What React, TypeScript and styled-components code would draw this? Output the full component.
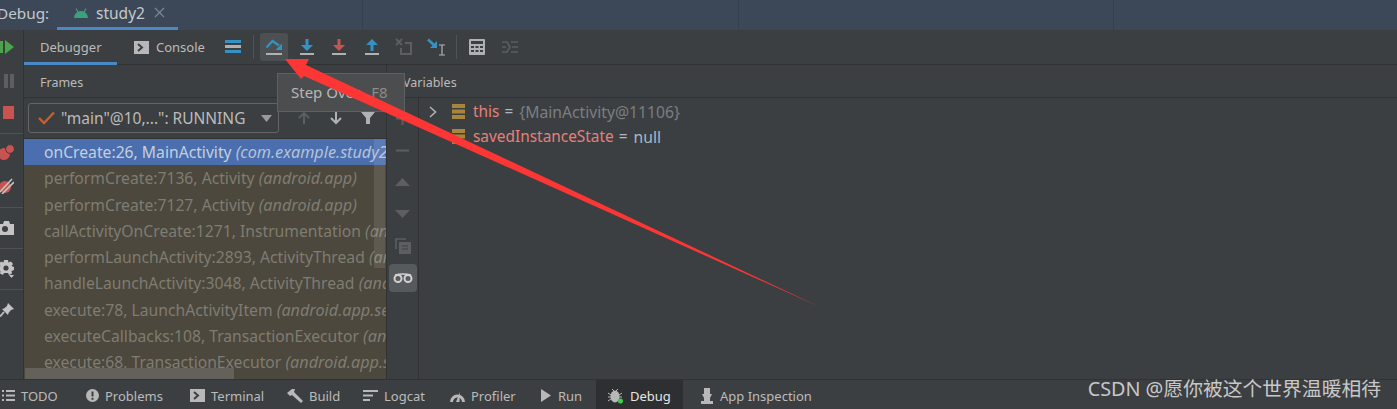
import React from 'react';
import styled, { createGlobalStyle } from 'styled-components';

const GlobalStyle = createGlobalStyle`
  html, body {
    margin: 0;
    padding: 0;
    background: #3c3f41;
  }
`;

const uiFont = `"Noto Sans", "Open Sans", "Liberation Sans", sans-serif`;

const Page = styled.div`
  position: relative;
  width: 1397px;
  height: 409px;
  overflow: hidden;
  display: flex;
  flex-direction: column;
  background: #3c3f41;
  color: #bbbbbb;
  font-family: ${uiFont};
  font-size: 13px;
`;

const TitleBar = styled.div`
  height: 30px;
  flex: none;
  display: grid;
  grid-template-columns: 363px 376px 375px 1fr;
  background: #3c4858;
`;

const TitleCell = styled.div`
  display: flex;
  align-items: stretch;
  border-right: 1px solid #34404d;
  &:last-child {
    border-right: 0;
  }
`;

const DebugLabel = styled.span`
  margin-left: -3px;
  width: 60px;
  line-height: 27px;
  font-size: 15.3px;
  color: #c4c8cc;
`;

const RunTab = styled.div`
  width: 121px;
  box-sizing: border-box;
  display: flex;
  align-items: center;
  gap: 7px;
  padding: 0 0 2px 16px;
  border-bottom: 3px solid #4a88c7;
  font-size: 15.5px;
  color: #c4c8cc;
`;

const TabClose = styled.span`
  display: flex;
  margin-left: 2px;
  color: #7d8791;
`;

const Body = styled.div`
  flex: 1;
  min-height: 0;
  display: flex;
`;

const LeftStrip = styled.div`
  width: 24px;
  flex: none;
  box-sizing: border-box;
  border-right: 1px solid #323232;
  display: flex;
  flex-direction: column;
  overflow: hidden;
`;

const StripGroup = styled.div<{ $height: number }>`
  height: ${(p) => p.$height}px;
  flex: none;
  box-sizing: border-box;
  display: flex;
  align-items: center;
  justify-content: flex-end;
  padding-right: 9px;
  border-bottom: 1px solid #515151;
  &:last-child {
    border-bottom: 0;
  }
`;

const StripStack = styled.div`
  display: flex;
  flex-direction: column;
  align-items: flex-end;
  padding: 0 9px 5px 0;
  border-bottom: 1px solid #515151;
`;

const StripIcon = styled.div<{ $height: number }>`
  height: ${(p) => p.$height}px;
  display: flex;
  align-items: center;
`;

const Main = styled.div`
  flex: 1;
  min-width: 0;
  display: flex;
  flex-direction: column;
`;

const TabsBar = styled.div`
  height: 35px;
  flex: none;
  box-sizing: border-box;
  display: flex;
  align-items: center;
  border-bottom: 1px solid #323232;
`;

const PanelTab = styled.div<{ $active?: boolean }>`
  height: 35px;
  box-sizing: border-box;
  display: flex;
  align-items: center;
  gap: 7px;
  padding-top: 3px;
  color: #bbbbbb;
  border-bottom: 3px solid ${(p) => (p.$active ? '#4a88c7' : 'transparent')};
`;

const DebuggerTab = styled(PanelTab)`
  width: 93px;
  padding-left: 16px;
`;

const ConsoleTab = styled(PanelTab)`
  width: 102px;
  padding-left: 17px;
`;

const ToolDivider = styled.span`
  width: 1px;
  height: 24px;
  background: #505254;
  margin: 0 6px;
`;

const TrailingDivider = styled(ToolDivider)`
  margin-left: 1px;
`;

const ToolButton = styled.div<{ $active?: boolean }>`
  width: 28px;
  height: 28px;
  margin-right: 4.5px;
  border-radius: 3px;
  display: flex;
  align-items: center;
  justify-content: center;
  background: ${(p) => (p.$active ? '#4c5052' : 'transparent')};
`;

const LayoutButton = styled.div`
  width: 28px;
  height: 28px;
  display: flex;
  align-items: center;
  justify-content: center;
`;

const Panels = styled.div`
  flex: 1;
  min-height: 0;
  display: flex;
`;

const FramesPanel = styled.div`
  width: 363px;
  flex: none;
  box-sizing: border-box;
  border-right: 1px solid #323232;
  display: flex;
  flex-direction: column;
`;

const PanelHeader = styled.div`
  height: 33px;
  flex: none;
  box-sizing: border-box;
  display: flex;
  align-items: center;
  padding: 2px 0 0 16px;
  border-bottom: 1px solid #323232;
  font-size: 12.5px;
  color: #bbbbbb;
`;

const ThreadRow = styled.div`
  height: 41px;
  flex: none;
  box-sizing: border-box;
  display: flex;
  align-items: center;
  padding: 0 0 0 4px;
  border-bottom: 1px solid #323232;
`;

const ThreadCombo = styled.div`
  width: 251px;
  height: 30px;
  box-sizing: border-box;
  display: flex;
  align-items: center;
  gap: 6px;
  padding: 0 6px 0 9px;
  border: 1px solid #646464;
  border-radius: 3px;
  font-size: 15.5px;
  color: #bbbbbb;
`;

const ComboText = styled.span`
  flex: 1;
  white-space: nowrap;
`;

const FrameTools = styled.div`
  display: flex;
  margin-left: 9px;
`;

const FrameTool = styled.div`
  width: 32px;
  display: flex;
  justify-content: center;
`;

const FrameList = styled.div`
  position: relative;
  flex: 1;
  min-height: 0;
  overflow: hidden;
  background: #4c483d;
`;

const FrameRow = styled.div<{ $selected?: boolean }>`
  height: 26.3px;
  box-sizing: border-box;
  padding-left: 20px;
  line-height: 27px;
  white-space: nowrap;
  font-size: 15.7px;
  color: ${(p) => (p.$selected ? '#c4cfde' : '#7f7c72')};
  background: ${(p) => (p.$selected ? '#4b6eaf' : 'transparent')};
  em {
    font-size: 16.2px;
    color: ${(p) => (p.$selected ? '#b4c2d6' : '#7f7c72')};
  }
`;

const VerticalThumb = styled.div`
  position: absolute;
  top: 0;
  right: 1px;
  width: 11px;
  height: 129px;
  background: rgba(255, 255, 255, 0.1);
`;

const HorizontalThumb = styled.div`
  position: absolute;
  left: 1px;
  bottom: 0;
  width: 209px;
  height: 11px;
  background: #63615a;
`;

const VariablesPanel = styled.div`
  flex: 1;
  min-width: 0;
  display: flex;
  flex-direction: column;
`;

const VariablesBody = styled.div`
  flex: 1;
  min-height: 0;
  display: flex;
`;

const SideTools = styled.div`
  width: 32px;
  flex: none;
  box-sizing: border-box;
  border-right: 1px solid #323232;
  display: flex;
  flex-direction: column;
  align-items: center;
  padding-top: 6px;
`;

const SideTool = styled.div<{ $active?: boolean }>`
  width: 28px;
  height: 28px;
  margin-bottom: 4px;
  border-radius: 4px;
  display: flex;
  align-items: center;
  justify-content: center;
  background: ${(p) => (p.$active ? '#565a5c' : 'transparent')};
`;

const VariableList = styled.div`
  flex: 1;
  padding: 1px 0 0 10px;
`;

const VariableRow = styled.div`
  height: 25px;
  display: flex;
  align-items: center;
  font-size: 15.4px;
  white-space: nowrap;
`;

const Expander = styled.span`
  width: 23px;
  display: flex;
`;

const VarName = styled.span`
  margin-left: 8px;
  color: #e5807b;
`;

const VarEquals = styled.span`
  padding: 0 2px 0 1px;
  color: #a9b7c6;
  white-space: pre;
`;

const VarValue = styled.span<{ $dim?: boolean }>`
  font-size: 15.7px;
  color: ${(p) => (p.$dim ? '#7a7e81' : '#a9b7c6')};
`;

const BottomBar = styled.div`
  height: 30px;
  flex: none;
  box-sizing: border-box;
  display: flex;
  align-items: stretch;
  border-top: 1px solid #323232;
  padding-left: 2px;
`;

const BottomItem = styled.div<{ $width: number; $active?: boolean }>`
  width: ${(p) => p.$width}px;
  flex: none;
  box-sizing: border-box;
  display: flex;
  align-items: center;
  gap: 6px;
  padding-top: 2px;
  font-size: 13px;
  color: ${(p) => (p.$active ? '#e6e6e6' : '#bbbbbb')};
  white-space: nowrap;
`;

const ActiveBottomItem = styled(BottomItem)`
  padding-left: 12px;
  background: #2d2f30;
`;

const InspectionItem = styled(BottomItem)`
  margin-left: 17px;
`;

const Watermark = styled.div`
  position: absolute;
  right: 16px;
  bottom: 9px;
  font-family: "Noto Sans", "Noto Sans CJK SC", sans-serif;
  font-size: 19.8px;
  line-height: 22px;
  color: #c8c8c8;
  white-space: nowrap;
`;

const Tooltip = styled.div`
  position: absolute;
  left: 277px;
  top: 73px;
  width: 128px;
  height: 39px;
  box-sizing: border-box;
  padding: 0 0 2px 13px;
  display: flex;
  align-items: center;
  gap: 11px;
  background: #4c4d4e;
  border: 1px solid #5f6061;
  font-size: 15px;
  color: #b8b8b8;
  white-space: nowrap;
`;

const Shortcut = styled.span`
  color: #8b8b8b;
`;

const ArrowOverlay = styled.svg`
  position: absolute;
  left: 0;
  top: 0;
  width: 1397px;
  height: 409px;
  pointer-events: none;
`;

const Icon = styled.svg`
  display: block;
  flex: none;
`;

const AndroidIcon = () => (
  <Icon width="16" height="12" viewBox="0 0 16 12">
    <path d="M1 11 a7 7 0 0 1 14 0z" fill="#3ba17c" />
    <path d="M3 1.5 L5 5 M13 1.5 L11 5" stroke="#3ba17c" strokeWidth="1.2" />
  </Icon>
);

const CloseIcon = () => (
  <Icon width="11" height="11" viewBox="0 0 11 11">
    <path d="M1 1 L10 10 M10 1 L1 10" stroke="currentColor" strokeWidth="1.2" />
  </Icon>
);

const TerminalIcon = () => (
  <Icon width="15" height="15" viewBox="0 0 15 15">
    <rect x="0" y="1" width="15" height="13" fill="#b8b8b8" />
    <path d="M4 4 L8 7.5 L4 11" fill="none" stroke="#3c3f41" strokeWidth="2" />
  </Icon>
);

const LayoutIcon = () => (
  <Icon width="16" height="14" viewBox="0 0 16 14">
    <rect y="0" width="16" height="3" fill="#3592c4" />
    <rect y="5" width="16" height="3" fill="#b0b0b0" />
    <rect y="10" width="16" height="3" fill="#3592c4" />
  </Icon>
);

const StepOverIcon = () => (
  <Icon width="18" height="18" viewBox="0 0 18 18">
    <path d="M1.5 9.5 L7.5 3 L14 7.5" fill="none" stroke="#3592c4" strokeWidth="2.2" />
    <path d="M17 5.5 V12 H10.5z" fill="#3592c4" />
    <rect x="1" y="15" width="16" height="2" fill="#afb1b3" />
  </Icon>
);

const StepDownIcon = ({ color }: { color: string }) => (
  <Icon width="16" height="18" viewBox="0 0 16 18">
    <path d="M6.5 1 H9.5 V7 H14 L8 13 L2 7 H6.5z" fill={color} />
    <rect x="1" y="15" width="14" height="2" fill="#afb1b3" />
  </Icon>
);

const StepUpIcon = () => (
  <Icon width="16" height="18" viewBox="0 0 16 18">
    <path d="M6.5 13 H9.5 V7 H14 L8 1 L2 7 H6.5z" fill="#3592c4" />
    <rect x="1" y="15" width="14" height="2" fill="#afb1b3" />
  </Icon>
);

const DropFrameIcon = () => (
  <Icon width="18" height="18" viewBox="0 0 18 18">
    <path d="M1 1 L7 7 M7 1 L1 7" stroke="#5c5e60" strokeWidth="1.8" />
    <path d="M10 5 H16 V16 H6 V10" fill="none" stroke="#5c5e60" strokeWidth="2" />
  </Icon>
);

const CursorIcon = () => (
  <Icon width="20" height="18" viewBox="0 0 20 18">
    <path d="M1 1.5 L7 7" fill="none" stroke="#3592c4" strokeWidth="2.6" />
    <path d="M10 3 V10 H3z" fill="#3592c4" />
    <path d="M12 7 H18 M12 17 H18 M15 7 V17" fill="none" stroke="#afb1b3" strokeWidth="1.2" />
  </Icon>
);

const CalculatorIcon = () => (
  <Icon width="16" height="16" viewBox="0 0 16 16">
    <rect width="16" height="16" rx="1" fill="#afb1b3" />
    <rect x="2" y="2" width="12" height="3" fill="#3c3f41" />
    <path d="M2 7h3v2H2zM6.5 7h3v2h-3zM11 7h3v2h-3zM2 11h3v2H2zM6.5 11h3v2h-3zM11 11h3v2h-3z" fill="#3c3f41" />
  </Icon>
);

const TraceIcon = () => (
  <Icon width="16" height="14" viewBox="0 0 16 14">
    <path
      d="M0 2 H5 L8 7 L5 12 H0 M0 7 H4 M9 2 H16 M10 7 H16 M9 12 H16"
      fill="none"
      stroke="#5c5e60"
      strokeWidth="1.6"
    />
  </Icon>
);

const CheckIcon = () => (
  <Icon width="17" height="14" viewBox="0 0 17 14">
    <path d="M1 7 L6 12 L16 1.5" fill="none" stroke="#c75f2d" strokeWidth="2.4" />
  </Icon>
);

const CaretDown = () => (
  <Icon width="11" height="7" viewBox="0 0 11 7">
    <path d="M0 0 H11 L5.5 7z" fill="#9a9a9a" />
  </Icon>
);

const ArrowIcon = ({ dir, color }: { dir: 'up' | 'down'; color: string }) => (
  <Icon width="14" height="14" viewBox="0 0 14 14">
    <path
      d={dir === 'up' ? 'M7 13 V2 M2 7 L7 2 L12 7' : 'M7 1 V12 M2 7 L7 12 L12 7'}
      fill="none"
      stroke={color}
      strokeWidth="2"
    />
  </Icon>
);

const FilterIcon = () => (
  <Icon width="14" height="14" viewBox="0 0 14 14">
    <path d="M0 1 H14 L9 7 V13 H5 V7z" fill="#afb1b3" />
  </Icon>
);

const ResumeIcon = () => (
  <Icon width="14" height="14" viewBox="0 0 14 14">
    <rect x="0" y="1" width="3" height="12" fill="#4aa54a" />
    <path d="M5 0 L14 7 L5 14z" fill="#4aa54a" />
  </Icon>
);

const PauseIcon = () => (
  <Icon width="10" height="14" viewBox="0 0 10 14">
    <rect x="0" y="0" width="4" height="14" fill="#5c5e60" />
    <rect x="6" y="0" width="4" height="14" fill="#5c5e60" />
  </Icon>
);

const StopIcon = () => (
  <Icon width="11" height="13" viewBox="0 0 11 13">
    <rect width="11" height="13" fill="#c75450" />
  </Icon>
);

const BreakpointsIcon = () => (
  <Icon width="15" height="16" viewBox="0 0 15 16">
    <circle cx="5" cy="10" r="6" fill="#c75450" />
    <circle cx="11" cy="5" r="4.4" fill="#c75450" stroke="#3c3f41" />
  </Icon>
);

const MuteIcon = () => (
  <Icon width="15" height="16" viewBox="0 0 15 16">
    <circle cx="6" cy="9" r="6" fill="#c75450" />
    <path d="M0 15 L13 1 M3 16 L15 4" stroke="#c4c4c4" strokeWidth="1.6" />
  </Icon>
);

const CameraIcon = () => (
  <Icon width="15" height="14" viewBox="0 0 15 14">
    <path d="M0 3 H4 L5 0 H10 L11 3 H15 V14 H0z" fill="#c4c4c4" />
    <circle cx="6" cy="8" r="3" fill="#3c3f41" />
  </Icon>
);

const GearIcon = () => (
  <Icon width="15" height="18" viewBox="0 0 15 18">
    <path
      d="M5 0 H9 L9.5 2.5 L12 1.5 L14 4 L12.5 6 L15 7 V10 L12.5 11 L13 13.5 L10 15 L9 13 H5 L4 15 L1 13.5 L1.5 11 L0 10 V7 L1.5 6 L0 4 L2 1.5 L4.5 2.5z"
      fill="#c4c4c4"
    />
    <circle cx="7" cy="8" r="2.6" fill="#3c3f41" />
    <path d="M10 15 H15 L12.5 18z" fill="#c4c4c4" />
  </Icon>
);

const PinIcon = () => (
  <Icon width="14" height="14" viewBox="0 0 14 14">
    <path d="M8 0 L14 6 L11 7 L8.5 10 L8 12 L2 6 L4 5.5 L7 3z" fill="#c4c4c4" />
    <path d="M4 9 L0 13.5" stroke="#c4c4c4" strokeWidth="1.8" />
  </Icon>
);

const PlusIcon = () => (
  <Icon width="13" height="13" viewBox="0 0 13 13">
    <path d="M6.5 0 V13 M0 6.5 H13" stroke="#5c5e60" strokeWidth="2" />
  </Icon>
);

const MinusIcon = () => (
  <Icon width="13" height="13" viewBox="0 0 13 13">
    <path d="M0 6.5 H13" stroke="#5c5e60" strokeWidth="2" />
  </Icon>
);

const TriangleIcon = ({ dir }: { dir: 'up' | 'down' }) => (
  <Icon width="15" height="8" viewBox="0 0 15 8">
    <path d={dir === 'up' ? 'M0 8 L7.5 0 L15 8z' : 'M0 0 L15 0 L7.5 8z'} fill="#5c5e60" />
  </Icon>
);

const CopyIcon = () => (
  <Icon width="16" height="16" viewBox="0 0 16 16">
    <path d="M1 11 V1 H11" fill="none" stroke="#5c5e60" strokeWidth="1.6" />
    <rect x="4" y="4" width="12" height="12" fill="#5c5e60" />
    <path d="M7 8 H13 M7 11 H13" stroke="#3c3f41" />
  </Icon>
);

const GlassesIcon = () => (
  <Icon width="20" height="10" viewBox="0 0 20 10">
    <circle cx="5" cy="5.5" r="3.5" fill="none" stroke="#d0d0d0" strokeWidth="2" />
    <circle cx="15" cy="5.5" r="3.5" fill="none" stroke="#d0d0d0" strokeWidth="2" />
    <path d="M2 2 Q10 0 18 2" fill="none" stroke="#d0d0d0" strokeWidth="1.4" />
  </Icon>
);

const ChevronIcon = () => (
  <Icon width="8" height="12" viewBox="0 0 8 12">
    <path d="M1 1 L6.5 6 L1 11" fill="none" stroke="#afb1b3" strokeWidth="1.6" />
  </Icon>
);

const FieldIcon = () => (
  <Icon width="13" height="15" viewBox="0 0 13 15">
    <path d="M0 0h13v4H0zM0 5.5h13v4H0zM0 11h13v4H0z" fill="#a9853a" />
  </Icon>
);

const ListIcon = () => (
  <Icon width="13" height="11" viewBox="0 0 13 11">
    <path d="M0 0h2v2H0zM0 4.5h2v2H0zM0 9h2v2H0zM4 0h9v2H4zM4 4.5h9v2H4zM4 9h9v2H4z" fill="#b8b8b8" />
  </Icon>
);

const AlertIcon = () => (
  <Icon width="13" height="13" viewBox="0 0 13 13">
    <circle cx="6.5" cy="6.5" r="6.5" fill="#b8b8b8" />
    <rect x="5.5" y="2.5" width="2" height="5" fill="#3c3f41" />
    <rect x="5.5" y="8.8" width="2" height="2" fill="#3c3f41" />
  </Icon>
);

const HammerIcon = () => (
  <Icon width="16" height="14" viewBox="0 0 16 14">
    <path d="M0 4 L5 0 H8 L7 3 L16 12 L14 14 L5 6 L3 7z" fill="#b8b8b8" />
  </Icon>
);

const LogcatIcon = () => (
  <Icon width="15" height="11" viewBox="0 0 15 11">
    <path d="M0 0h15v2H0zM0 4.5h10v2H0zM0 9h7v2H0z" fill="#b8b8b8" />
  </Icon>
);

const ProfilerIcon = () => (
  <Icon width="15" height="13" viewBox="0 0 15 13">
    <path d="M0 13 A7.5 7.5 0 0 1 15 13 H12 A4.5 4.5 0 0 0 3 13z" fill="#b8b8b8" />
    <path d="M6 13 L10 3 L9.5 13z" fill="#b8b8b8" />
  </Icon>
);

const RunIcon = () => (
  <Icon width="12" height="13" viewBox="0 0 12 13">
    <path d="M1 0 L11 6.5 L1 13z" fill="#b8b8b8" />
  </Icon>
);

const BugIcon = () => (
  <Icon width="16" height="16" viewBox="0 0 16 16">
    <ellipse cx="7" cy="8.5" rx="4.5" ry="6" fill="#b8b8b8" />
    <path d="M0 5 L3 7 M0 9 H3 M0 13 L3 11 M14 5 L11 7 M14 9 H11 M14 13 L11 11 M4 1 L6 3 M10 1 L8 3" stroke="#b8b8b8" />
    <circle cx="12.5" cy="13" r="2.5" fill="#3fd04a" />
  </Icon>
);

const InspectionIcon = () => (
  <Icon width="14" height="16" viewBox="0 0 14 16">
    <path d="M4 0 H10 V6 H12 L10 10 V13 H13 V16 H1 V13 H4 V10 L2 6 H4z" fill="#b8b8b8" />
  </Icon>
);

const frames: [string, string][] = [
  ['performCreate:7136, Activity', '(android.app)'],
  ['performCreate:7127, Activity', '(android.app)'],
  ['callActivityOnCreate:1271, Instrumentation', '(android.app)'],
  ['performLaunchActivity:2893, ActivityThread', '(android.app)'],
  ['handleLaunchActivity:3048, ActivityThread', '(android.app)'],
  ['execute:78, LaunchActivityItem', '(android.app.servertransaction)'],
  ['executeCallbacks:108, TransactionExecutor', '(android.app)'],
  ['execute:68, TransactionExecutor', '(android.app.servertransaction)'],
];

export default function App() {
  return (
    <>
      <GlobalStyle />
      <Page>
        <TitleBar>
          <TitleCell>
            <DebugLabel>Debug:</DebugLabel>
            <RunTab>
              <AndroidIcon />
              study2
              <TabClose>
                <CloseIcon />
              </TabClose>
            </RunTab>
          </TitleCell>
          <TitleCell />
          <TitleCell />
          <TitleCell />
        </TitleBar>
        <Body>
          <LeftStrip>
            <StripStack>
              <StripIcon $height={34}><ResumeIcon /></StripIcon>
              <StripIcon $height={33}><PauseIcon /></StripIcon>
              <StripIcon $height={31}><StopIcon /></StripIcon>
            </StripStack>
            <StripStack>
              <StripIcon $height={36}><BreakpointsIcon /></StripIcon>
              <StripIcon $height={32}><MuteIcon /></StripIcon>
            </StripStack>
            <StripGroup $height={41}><CameraIcon /></StripGroup>
            <StripGroup $height={41}><GearIcon /></StripGroup>
            <StripGroup $height={40}><PinIcon /></StripGroup>
          </LeftStrip>
          <Main>
            <TabsBar>
              <DebuggerTab $active>Debugger</DebuggerTab>
              <ConsoleTab>
                <TerminalIcon />
                Console
              </ConsoleTab>
              <LayoutButton><LayoutIcon /></LayoutButton>
              <ToolDivider />
              <ToolButton $active><StepOverIcon /></ToolButton>
              <ToolButton><StepDownIcon color="#3592c4" /></ToolButton>
              <ToolButton><StepDownIcon color="#c75450" /></ToolButton>
              <ToolButton><StepUpIcon /></ToolButton>
              <ToolButton><DropFrameIcon /></ToolButton>
              <ToolButton><CursorIcon /></ToolButton>
              <TrailingDivider />
              <ToolButton><CalculatorIcon /></ToolButton>
              <ToolButton><TraceIcon /></ToolButton>
            </TabsBar>
            <Panels>
              <FramesPanel>
                <PanelHeader>Frames</PanelHeader>
                <ThreadRow>
                  <ThreadCombo>
                    <CheckIcon />
                    <ComboText>"main"@10,...": RUNNING</ComboText>
                    <CaretDown />
                  </ThreadCombo>
                  <FrameTools>
                    <FrameTool><ArrowIcon dir="up" color="#5c5e60" /></FrameTool>
                    <FrameTool><ArrowIcon dir="down" color="#afb1b3" /></FrameTool>
                    <FrameTool><FilterIcon /></FrameTool>
                  </FrameTools>
                </ThreadRow>
                <FrameList>
                  <FrameRow $selected>
                    onCreate:26, MainActivity <em>(com.example.study2)</em>
                  </FrameRow>
                  {frames.map(([name, pkg]) => (
                    <FrameRow key={name}>
                      {name} <em>{pkg}</em>
                    </FrameRow>
                  ))}
                  <VerticalThumb />
                  <HorizontalThumb />
                </FrameList>
              </FramesPanel>
              <VariablesPanel>
                <PanelHeader>Variables</PanelHeader>
                <VariablesBody>
                  <SideTools>
                    <SideTool><PlusIcon /></SideTool>
                    <SideTool><MinusIcon /></SideTool>
                    <SideTool><TriangleIcon dir="up" /></SideTool>
                    <SideTool><TriangleIcon dir="down" /></SideTool>
                    <SideTool><CopyIcon /></SideTool>
                    <SideTool $active><GlassesIcon /></SideTool>
                  </SideTools>
                  <VariableList>
                    <VariableRow>
                      <Expander><ChevronIcon /></Expander>
                      <FieldIcon />
                      <VarName>this</VarName>
                      <VarEquals> = </VarEquals>
                      <VarValue $dim>{'{MainActivity@11106}'}</VarValue>
                    </VariableRow>
                    <VariableRow>
                      <Expander />
                      <FieldIcon />
                      <VarName>savedInstanceState</VarName>
                      <VarEquals> = </VarEquals>
                      <VarValue>null</VarValue>
                    </VariableRow>
                  </VariableList>
                </VariablesBody>
              </VariablesPanel>
            </Panels>
          </Main>
        </Body>
        <BottomBar>
          <BottomItem $width={84}><ListIcon />TODO</BottomItem>
          <BottomItem $width={104}><AlertIcon />Problems</BottomItem>
          <BottomItem $width={97}><TerminalIcon />Terminal</BottomItem>
          <BottomItem $width={76}><HammerIcon />Build</BottomItem>
          <BottomItem $width={87}><LogcatIcon />Logcat</BottomItem>
          <BottomItem $width={90}><ProfilerIcon />Profiler</BottomItem>
          <BottomItem $width={56}><RunIcon />Run</BottomItem>
          <ActiveBottomItem $width={87} $active><BugIcon />Debug</ActiveBottomItem>
          <InspectionItem $width={130}><InspectionIcon />App Inspection</InspectionItem>
        </BottomBar>
        <Watermark>CSDN @愿你被这个世界温暖相待</Watermark>
        <Tooltip>
          Step Over
          <Shortcut>F8</Shortcut>
        </Tooltip>
        <ArrowOverlay viewBox="0 0 1397 409">
          <polygon points="285,59 309,59 306,65 820,307 304,76 301,79" fill="#fc3535" />
        </ArrowOverlay>
      </Page>
    </>
  );
}
